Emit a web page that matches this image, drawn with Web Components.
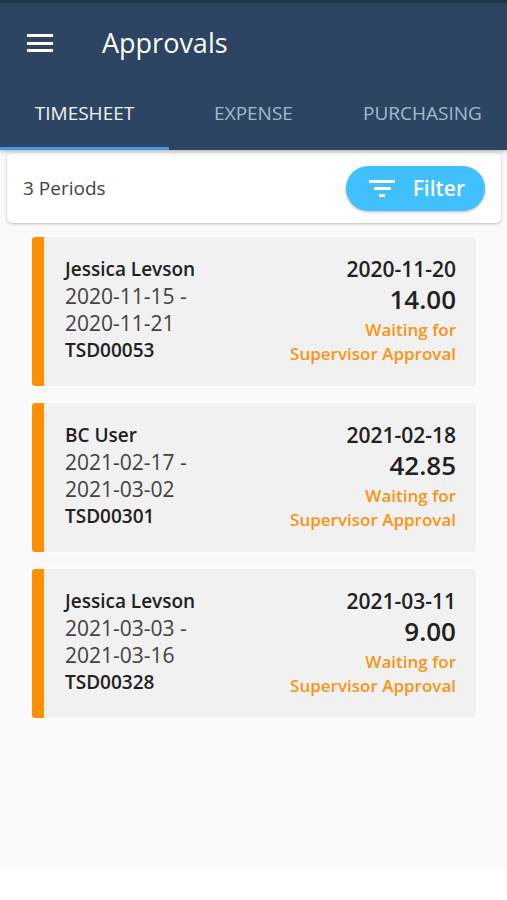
<!DOCTYPE html>
<html lang="en">
<head>
<meta charset="utf-8">
<meta name="viewport" content="width=device-width, initial-scale=1">
<title>Approvals</title>
<style>
	body {
		margin: 0;
		background: #fff;
		color: #424242;
		font: 21px/27px "Open Sans", "Noto Sans", sans-serif;
	}
</style>
</head>
<body>
<approvals-app>
	<app-header slot="header" heading="Approvals">
		<app-tab selected>TIMESHEET</app-tab>
		<app-tab>EXPENSE</app-tab>
		<app-tab>PURCHASING</app-tab>
	</app-header>
	<filter-bar>3 Periods</filter-bar>
	<period-card>
		<span slot="name">Jessica Levson</span>
		<span slot="range">2020-11-15 - 2020-11-21</span>
		<span slot="code">TSD00053</span>
		<span slot="date">2020-11-20</span>
		<span slot="hours">14.00</span>
		<span slot="status">Waiting for Supervisor Approval</span>
	</period-card>
	<period-card>
		<span slot="name">BC User</span>
		<span slot="range">2021-02-17 - 2021-03-02</span>
		<span slot="code">TSD00301</span>
		<span slot="date">2021-02-18</span>
		<span slot="hours">42.85</span>
		<span slot="status">Waiting for Supervisor Approval</span>
	</period-card>
	<period-card>
		<span slot="name">Jessica Levson</span>
		<span slot="range">2021-03-03 - 2021-03-16</span>
		<span slot="code">TSD00328</span>
		<span slot="date">2021-03-11</span>
		<span slot="hours">9.00</span>
		<span slot="status">Waiting for Supervisor Approval</span>
	</period-card>
</approvals-app>

<script>
class ApprovalsApp
extends HTMLElement
{
	constructor ()
	{
		super();
		this.attachShadow({mode:"open"});
		this.shadowRoot.innerHTML = `
			<style>
				:host {
					display: flex;
					flex-direction: column;
					box-sizing: border-box;
					min-height: 100vh;
					padding-bottom: 32px;
				}
				main {
					flex: 1;
					background: #fafafa;
					padding-top: 3px;
				}
			</style>
			<slot name="header"></slot>
			<main><slot></slot></main>
		`;
	}
}
customElements.define("approvals-app", ApprovalsApp);

class AppHeader
extends HTMLElement
{
	constructor ()
	{
		super();
		this.attachShadow({mode:"open"});
		this.shadowRoot.innerHTML = `
			<style>
				:host {
					display: block;
					position: relative;
					background: #2d4562;
					border-top: 3px solid #22354d;
					box-shadow: 0 1px 5px rgba(0, 0, 0, 0.35);
				}
				.bar {
					display: flex;
					align-items: center;
					gap: 46px;
					height: 80px;
					padding: 0 24px;
				}
				button {
					display: flex;
					padding: 0;
					border: 0;
					background: none;
					color: #fff;
				}
				h1 {
					margin: 0;
					color: #fff;
					font-size: 27px;
					line-height: 36px;
					font-weight: 400;
				}
				nav {
					display: grid;
					grid-template-columns: repeat(3, 1fr);
				}
			</style>
			<div class="bar">
				<button type="button" aria-label="Menu">
					<svg width="32" height="32" viewBox="0 0 32 32" fill="currentColor">
						<path d="M3 7h26v3H3zM3 15h26v3H3zM3 22h26v3H3z"/>
					</svg>
				</button>
				<h1></h1>
			</div>
			<nav role="tablist"><slot></slot></nav>
		`;
	}

	connectedCallback ()
	{
		this.shadowRoot.querySelector("h1").textContent = this.getAttribute("heading");
		this.addEventListener("click", this.onClick.bind(this));
	}

	onClick (event)
	{
		const tab = event.target.closest("app-tab");
		if (!tab) {
			return;
		}
		for (const other of this.querySelectorAll("app-tab")) {
			other.toggleAttribute("selected", other === tab);
		}
	}
}
customElements.define("app-header", AppHeader);

class AppTab
extends HTMLElement
{
	static get observedAttributes () {
		return ["selected"];
	}

	constructor ()
	{
		super();
		this.attachShadow({mode:"open"});
		this.shadowRoot.innerHTML = `
			<style>
				:host {
					display: block;
				}
				button {
					display: block;
					width: 100%;
					height: 67px;
					padding: 0 0 3px;
					border: 0;
					border-bottom: 3px solid transparent;
					background: none;
					color: #a5b8cf;
					font: inherit;
					font-size: 19px;
				}
				:host([selected]) button {
					color: #f0f6fc;
					border-bottom-color: #3d9be9;
				}
			</style>
			<button type="button" role="tab" aria-selected="false"><slot></slot></button>
		`;
	}

	attributeChangedCallback ()
	{
		this.shadowRoot.querySelector("button")
			.setAttribute("aria-selected", this.hasAttribute("selected"));
	}
}
customElements.define("app-tab", AppTab);

class FilterBar
extends HTMLElement
{
	constructor ()
	{
		super();
		this.attachShadow({mode:"open"});
		this.shadowRoot.innerHTML = `
			<style>
				:host {
					display: flex;
					align-items: center;
					justify-content: space-between;
					box-sizing: border-box;
					height: 70px;
					margin: 0 6px 14px 7px;
					padding: 0 16px;
					border-radius: 5px;
					background: #fff;
					box-shadow: 0 1px 3px rgba(0, 0, 0, 0.25);
					font-size: 19px;
				}
				button {
					display: flex;
					align-items: center;
					gap: 15px;
					height: 45px;
					padding: 0 20px;
					border: 0;
					border-radius: 23px;
					background: #40c0fc;
					color: #fff;
					font: inherit;
					font-size: 21px;
					font-weight: 600;
					box-shadow: 0 1px 3px rgba(0, 0, 0, 0.3);
				}
			</style>
			<slot></slot>
			<button type="button">
				<svg width="32" height="32" viewBox="0 0 32 32" fill="currentColor">
					<path d="M3 8h26v3H3zM8 15h17v3H8zM13 22h6v3h-6z"/>
				</svg>
				Filter
			</button>
		`;
	}
}
customElements.define("filter-bar", FilterBar);

class PeriodCard
extends HTMLElement
{
	constructor ()
	{
		super();
		this.attachShadow({mode:"open"});
		this.shadowRoot.innerHTML = `
			<style>
				:host {
					display: grid;
					grid-template-columns: 6fr 5fr;
					margin: 0 31px 17px 32px;
					padding: 19px 20px 20px 21px;
					border-left: 12px solid #ff9100;
					border-radius: 3px;
					background: #f1f1f1;
					box-shadow: 0 0 0 2px #fdfdfd;
				}
				.info, .total {
					display: flex;
					flex-direction: column;
				}
				.info {
					padding-right: 60px;
				}
				.total {
					align-items: flex-end;
					text-align: right;
				}
				.name, .code {
					color: #212121;
					font-size: 19px;
					font-weight: 600;
				}
				.date {
					color: #212121;
					font-weight: 600;
				}
				.hours {
					color: #212121;
					font-size: 26px;
					line-height: 32px;
					font-weight: 600;
				}
				.status {
					margin-top: 3px;
					color: #fb9414;
					font-size: 17px;
					line-height: 24px;
					font-weight: 600;
				}
			</style>
			<div class="info">
				<div class="name"><slot name="name"></slot></div>
				<div class="range"><slot name="range"></slot></div>
				<div class="code"><slot name="code"></slot></div>
			</div>
			<div class="total">
				<div class="date"><slot name="date"></slot></div>
				<div class="hours"><slot name="hours"></slot></div>
				<div class="status"><slot name="status"></slot></div>
			</div>
		`;
	}
}
customElements.define("period-card", PeriodCard);
</script>
</body>
</html>
